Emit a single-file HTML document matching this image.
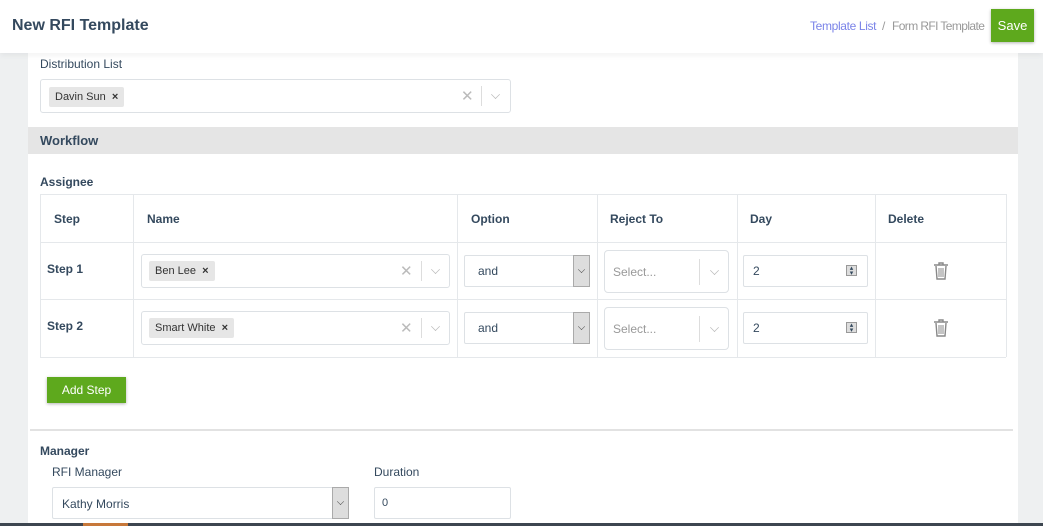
<!DOCTYPE html>
<html><head><style>
*{box-sizing:border-box;margin:0;padding:0}
html,body{width:1043px;height:526px;overflow:hidden}
body{background:#eef0f1;font-family:"Liberation Sans",sans-serif;color:#34495e;position:relative}
.a{position:absolute}
.hdr{left:0;top:0;width:1043px;height:53px;background:#fff;box-shadow:0 2px 6px rgba(0,0,0,.06);z-index:2}
.card{left:28px;top:53px;width:990px;height:473px;background:#fff}
.box{border:1px solid #dde1e5;border-radius:3px;background:#fff}
.tag{background:#e6e6e6;border-radius:2px;font-size:11px;color:#333;padding:0 6px;height:20px;line-height:20px}
.x{color:#bbb;font-size:15px}
.sep{width:1px;background:#ddd}
.chev{width:9px;height:9px;border-right:1.3px solid #bbb;border-bottom:1.3px solid #bbb;transform:rotate(45deg) scale(.7)}
.th{font-size:12px;font-weight:bold;color:#34495e}
.gl{background:#e5e8eb}
.gbtn{background:#ddd;border:1px solid #aaa}
</style></head><body>
<div class="a hdr">
 <div class="a" style="left:12px;top:17px;font-size:16px;font-weight:bold;color:#34495e">New RFI Template</div>
 <div class="a" style="left:810px;top:19px;font-size:12px;color:#7a83e8;white-space:nowrap;letter-spacing:-0.35px">Template List</div>
 <div class="a" style="left:882px;top:19px;font-size:12px;color:#999">/</div>
 <div class="a" style="left:892px;top:19px;font-size:12px;color:#999;white-space:nowrap;letter-spacing:-0.6px">Form RFI Template</div>
 <div class="a" style="left:991px;top:9px;width:43px;height:33px;background:#5ea91d;color:#fff;font-size:13px;text-align:center;line-height:33px;box-shadow:0 1px 3px rgba(0,0,0,.3)">Save</div>
</div>
<div class="a card"></div>
<div class="a" style="left:40px;top:57px;font-size:12px">Distribution List</div>
<div class="a box" style="left:40px;top:79px;width:471px;height:34px"></div>
<div class="a tag" style="left:49px;top:87px">Davin Sun &nbsp;<b style="font-size:11px">×</b></div>
<div class="a x" style="left:461px;top:87px">✕</div>
<div class="a sep" style="left:481px;top:86px;height:20px"></div>
<div class="a chev" style="left:491px;top:90px"></div>
<div class="a" style="left:28px;top:127px;width:990px;height:27px;background:#e5e5e5"></div>
<div class="a" style="left:40px;top:133px;font-size:13px;font-weight:bold">Workflow</div>
<div class="a th" style="left:40px;top:175px">Assignee</div>
<div class="a gl" style="left:40px;top:194px;width:966px;height:1px"></div>
<div class="a gl" style="left:40px;top:242px;width:966px;height:1px"></div>
<div class="a gl" style="left:40px;top:299px;width:966px;height:1px"></div>
<div class="a gl" style="left:40px;top:357px;width:966px;height:1px"></div>
<div class="a gl" style="left:40px;top:194px;width:1px;height:163px"></div>
<div class="a gl" style="left:133px;top:194px;width:1px;height:163px"></div>
<div class="a gl" style="left:457px;top:194px;width:1px;height:163px"></div>
<div class="a gl" style="left:597px;top:194px;width:1px;height:163px"></div>
<div class="a gl" style="left:737px;top:194px;width:1px;height:163px"></div>
<div class="a gl" style="left:875px;top:194px;width:1px;height:163px"></div>
<div class="a gl" style="left:1006px;top:194px;width:1px;height:163px"></div>
<div class="a th" style="left:54px;top:212px">Step</div>
<div class="a th" style="left:147px;top:212px">Name</div>
<div class="a th" style="left:471px;top:212px">Option</div>
<div class="a th" style="left:610px;top:212px">Reject To</div>
<div class="a th" style="left:750px;top:212px">Day</div>
<div class="a th" style="left:888px;top:212px">Delete</div>

<div class="a th" style="left:47px;top:262px">Step 1</div>
<div class="a box" style="left:141px;top:254px;width:309px;height:34px"></div>
<div class="a tag" style="left:149px;top:261px">Ben Lee &nbsp;<b>×</b></div>
<div class="a x" style="left:400px;top:262px">✕</div>
<div class="a sep" style="left:421px;top:261px;height:20px"></div>
<div class="a chev" style="left:431px;top:265px"></div>
<div class="a box" style="left:464px;top:255px;width:126px;height:32px;border-radius:2px"></div>
<div class="a" style="left:478px;top:264px;font-size:12px">and</div>
<div class="a gbtn" style="left:573px;top:255px;width:17px;height:32px"></div>
<div class="a chev" style="left:577px;top:265px;border-color:#555;transform:rotate(45deg) scale(.55)"></div>
<div class="a box" style="left:604px;top:250px;width:125px;height:43px;border-radius:4px"></div>
<div class="a" style="left:613px;top:265px;font-size:12px;color:#999">Select...</div>
<div class="a sep" style="left:699px;top:259px;height:26px"></div>
<div class="a chev" style="left:710px;top:266px"></div>
<div class="a box" style="left:743px;top:255px;width:125px;height:32px;border-radius:2px"></div>
<div class="a" style="left:753px;top:264px;font-size:12px">2</div>
<div class="a" style="left:846px;top:265px;width:11px;height:11px;background:#ddd;border:1px solid #999;font-size:7px;line-height:5px;text-align:center">▴<br>▾</div>
<svg class="a" style="left:933px;top:262px" width="16" height="18" viewBox="0 0 16 18"><path d="M1 3h14M6 3V1h4v2M3 4l1 13h8l1-13" fill="none" stroke="#888" stroke-width="1.4"/><path d="M6 6v9M8 6v9M10 6v9" stroke="#888"/></svg>

<div class="a th" style="left:47px;top:319px">Step 2</div>
<div class="a box" style="left:141px;top:311px;width:309px;height:34px"></div>
<div class="a tag" style="left:149px;top:318px">Smart White &nbsp;<b>×</b></div>
<div class="a x" style="left:400px;top:319px">✕</div>
<div class="a sep" style="left:421px;top:318px;height:20px"></div>
<div class="a chev" style="left:431px;top:322px"></div>
<div class="a box" style="left:464px;top:312px;width:126px;height:32px;border-radius:2px"></div>
<div class="a" style="left:478px;top:321px;font-size:12px">and</div>
<div class="a gbtn" style="left:573px;top:312px;width:17px;height:32px"></div>
<div class="a chev" style="left:577px;top:322px;border-color:#555;transform:rotate(45deg) scale(.55)"></div>
<div class="a box" style="left:604px;top:307px;width:125px;height:43px;border-radius:4px"></div>
<div class="a" style="left:613px;top:322px;font-size:12px;color:#999">Select...</div>
<div class="a sep" style="left:699px;top:316px;height:26px"></div>
<div class="a chev" style="left:710px;top:323px"></div>
<div class="a box" style="left:743px;top:312px;width:125px;height:32px;border-radius:2px"></div>
<div class="a" style="left:753px;top:321px;font-size:12px">2</div>
<div class="a" style="left:846px;top:322px;width:11px;height:11px;background:#ddd;border:1px solid #999;font-size:7px;line-height:5px;text-align:center">▴<br>▾</div>
<svg class="a" style="left:933px;top:319px" width="16" height="18" viewBox="0 0 16 18"><path d="M1 3h14M6 3V1h4v2M3 4l1 13h8l1-13" fill="none" stroke="#888" stroke-width="1.4"/><path d="M6 6v9M8 6v9M10 6v9" stroke="#888"/></svg>

<div class="a" style="left:47px;top:377px;width:79px;height:26px;background:#5ea91d;color:#fff;font-size:12px;text-align:center;line-height:26px;box-shadow:0 1px 3px rgba(0,0,0,.3)">Add Step</div>
<div class="a" style="left:30px;top:429px;width:983px;height:2px;background:#e2e2e2"></div>
<div class="a" style="left:40px;top:444px;font-size:12px;font-weight:bold">Manager</div>
<div class="a" style="left:52px;top:465px;font-size:12px">RFI Manager</div>
<div class="a box" style="left:52px;top:487px;width:297px;height:32px;border-radius:2px"></div>
<div class="a" style="left:62px;top:497px;font-size:12px">Kathy Morris</div>
<div class="a gbtn" style="left:332px;top:487px;width:17px;height:32px"></div>
<div class="a chev" style="left:336px;top:497px;border-color:#555;transform:rotate(45deg) scale(.55)"></div>
<div class="a" style="left:374px;top:465px;font-size:12px">Duration</div>
<div class="a box" style="left:374px;top:487px;width:137px;height:32px;border-radius:2px"></div>
<div class="a" style="left:382px;top:497px;font-size:11px">0</div>
<div class="a" style="left:0;top:523px;width:1043px;height:3px;background:#3d4650"></div>
<div class="a" style="left:83px;top:523px;width:45px;height:3px;background:#c7783a"></div>
</body></html>
